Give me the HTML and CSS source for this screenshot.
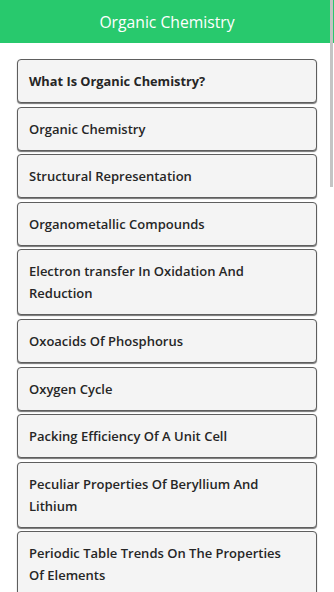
FILE: index.html
```html
<!DOCTYPE html>
<html>
<head>
<meta charset="utf-8">
<link rel="stylesheet" href="styles.css">
</head>
<body>
<header class="appbar"><h1 class="title">Organic Chemistry</h1></header>
<main class="list">
  <div class="item first">What Is Organic Chemistry?</div>
  <div class="item">Organic Chemistry</div>
  <div class="item">Structural Representation</div>
  <div class="item">Organometallic Compounds</div>
  <div class="item">Electron transfer In Oxidation And Reduction</div>
  <div class="item">Oxoacids Of Phosphorus</div>
  <div class="item">Oxygen Cycle</div>
  <div class="item">Packing Efficiency Of A Unit Cell</div>
  <div class="item">Peculiar Properties Of Beryllium And Lithium</div>
  <div class="item">Periodic Table Trends On The Properties Of Elements</div>
</main>
<div class="scrollbar"></div>
</body>
</html>
```
FILE: styles.css
```css
html, body {
  margin: 0;
  padding: 0;
  height: 100%;
  overflow: hidden;
  background: #ffffff;
  font-family: "Open Sans", "Liberation Sans", sans-serif;
}
.appbar {
  height: 43px;
  background: #28c96d;
  display: flex;
  align-items: center;
  justify-content: center;
}
.title {
  margin: 0;
  color: #ffffff;
  font-size: 15.7px;
  font-weight: 400;
  letter-spacing: 0;
}
.list {
  padding: 16px 17px 0 17px;
  width: 300px;
}
.item {
  box-sizing: border-box;
  background: #f4f4f4;
  border: 1px solid #5e5e5e;
  border-radius: 4px;
  box-shadow: 0 1px 1px rgba(0,0,0,0.55);
  padding: 10px 20px 10px 11px;
  line-height: 22px;
  font-size: 13px;
  font-weight: 600;
  color: #262626;
  margin-bottom: 3.6px;
}
.item.first {
  font-weight: 700;
  font-size: 12.8px;
}
.scrollbar {
  position: absolute;
  top: 0;
  left: 330px;
  width: 3px;
  height: 187px;
  background: #c4c4c4;
}
```
